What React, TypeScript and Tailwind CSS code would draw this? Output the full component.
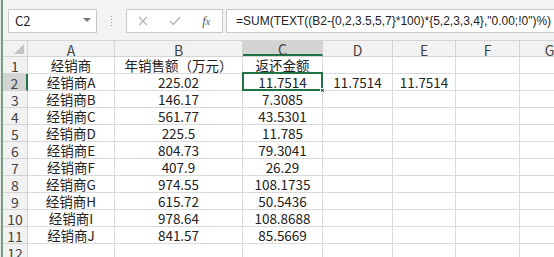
import React from "react";

const cols = [
  { k: "A", w: "w-[87px]" },
  { k: "B", w: "w-[128px]" },
  { k: "C", w: "w-[80px]" },
  { k: "D", w: "w-[70px]" },
  { k: "E", w: "w-[63px]" },
  { k: "F", w: "w-[64px]" },
  { k: "G", w: "w-[60px]" },
];

const data: string[][] = [
  ["经销商", "年销售额（万元）", "返还金额", "", "", "", ""],
  ["经销商A", "225.02", "11.7514", "11.7514", "11.7514", "", ""],
  ["经销商B", "146.17", "7.3085", "", "", "", ""],
  ["经销商C", "561.77", "43.5301", "", "", "", ""],
  ["经销商D", "225.5", "11.785", "", "", "", ""],
  ["经销商E", "804.73", "79.3041", "", "", "", ""],
  ["经销商F", "407.9", "26.29", "", "", "", ""],
  ["经销商G", "974.55", "108.1735", "", "", "", ""],
  ["经销商H", "615.72", "50.5436", "", "", "", ""],
  ["经销商I", "978.64", "108.8688", "", "", "", ""],
  ["经销商J", "841.57", "85.5669", "", "", "", ""],
  ["", "", "", "", "", "", ""],
];

const font = { fontFamily: '"Noto Sans CJK SC", "Noto Sans", sans-serif' };

export default function App() {
  return (
    <div
      className="w-[554px] h-[257px] overflow-hidden bg-white flex text-[#222]"
      style={font}
    >
      <div className="w-[1px] shrink-0 bg-[#e8e8e8]" />
      <div className="w-[2px] shrink-0 bg-[#789c82]" />
      <div className="flex-1 flex flex-col min-w-0">
        {/* toolbar */}
        <div className="h-[41px] shrink-0 bg-[#f3f3f3] border-b border-[#d4d4d4] flex items-center pt-[1px]">
          <div className="ml-[5px] w-[89px] h-[24px] bg-white border border-[#c8c8c8] flex items-center justify-between pl-[6px] pr-[5px] shrink-0">
            <span className="text-[13px] text-[#222]">C2</span>
            <svg width="8" height="5" viewBox="0 0 8 5">
              <path d="M0 0 L8 0 L4 4 Z" fill="#777" />
            </svg>
          </div>
          <div className="w-[29px] shrink-0 flex justify-center">
            <div className="flex flex-col gap-[2px]">
              <div className="w-[1px] h-[1px] bg-[#999]" />
              <div className="w-[1px] h-[1px] bg-[#999]" />
              <div className="w-[1px] h-[1px] bg-[#999]" />
              <div className="w-[1px] h-[1px] bg-[#999]" />
            </div>
          </div>
          <div className="w-[97px] h-[24px] bg-white border border-[#c8c8c8] flex items-center shrink-0">
            <div className="w-[32px] flex justify-center">
              <svg width="10" height="10" viewBox="0 0 10 10">
                <path d="M1 1 L9 9 M9 1 L1 9" stroke="#b5b5b5" strokeWidth="1.3" />
              </svg>
            </div>
            <div className="w-[32px] flex justify-center">
              <svg width="12" height="10" viewBox="0 0 12 10">
                <path d="M1 5 L4.5 8.5 L11 1" stroke="#b5b5b5" strokeWidth="1.3" fill="none" />
              </svg>
            </div>
            <div className="w-[32px] flex justify-center">
              <span
                className="italic text-[13px] text-[#555]"
                style={{ fontFamily: '"Liberation Serif", serif' }}
              >
                f<span className="text-[10px]">x</span>
              </span>
            </div>
          </div>
          <div className="ml-[3px] flex-1 h-[24px] bg-white border border-r-0 border-[#c8c8c8] flex items-center pl-[9px] whitespace-nowrap overflow-hidden">
            <span
              className="text-[12px] text-[#222]"
              style={{ fontFamily: '"Liberation Sans", Arial, sans-serif' }}
            >
              =SUM(TEXT((B2-{"{"}0,2,3.5,5,7{"}"}*100)*{"{"}5,2,3,3,4{"}"},"0.00;!0")%)
            </span>
          </div>
        </div>
        {/* column headers */}
        <div className="flex h-[16px] shrink-0 bg-[#f2f2f2] border-b border-[#d4d4d4]">
          <div className="w-[25px] shrink-0 border-r border-[#d4d4d4] relative">
            <svg className="absolute right-[3px] bottom-[2px]" width="10" height="10" viewBox="0 0 10 10">
              <path d="M10 0 L10 10 L0 10 Z" fill="#c4c4c4" />
            </svg>
          </div>
          {cols.map((c) => (
            <div
              key={c.k}
              className={`${c.w} shrink-0 border-r border-[#d4d4d4] flex items-center justify-center pt-[2px] text-[14px] leading-none text-[#444] ${
                c.k === "C" ? "bg-[#d3d3d3] border-b-2 border-b-[#217346]" : ""
              }`}
            >
              {c.k}
            </div>
          ))}
        </div>
        {/* rows */}
        {data.map((row, ri) => (
          <div key={ri} className="flex h-[17px] shrink-0">
            <div
              className={`w-[25px] shrink-0 border-b border-r flex items-center justify-center pt-[2px] text-[14px] leading-none text-[#444] ${
                ri === 1
                  ? "bg-[#d3d3d3] border-r-2 border-r-[#217346] border-b-[#d4d4d4]"
                  : "bg-[#f2f2f2] border-[#d4d4d4]"
              }`}
            >
              {ri + 1}
            </div>
            {cols.map((c, ci) => (
              <div
                key={c.k}
                className={`${c.w} shrink-0 border-r border-b border-[#dadada] flex items-center justify-center pt-[2px] text-[13.5px] leading-none whitespace-nowrap relative`}
              >
                {row[ci]}
                {ri === 1 && ci === 2 && (
                  <div className="absolute left-[-1px] top-[-2px] right-[-1px] bottom-[-1px] border-2 border-[#217346]">
                    <div className="absolute right-[-4px] bottom-[-4px] w-[5px] h-[5px] bg-[#217346] border border-white" />
                  </div>
                )}
              </div>
            ))}
          </div>
        ))}
      </div>
    </div>
  );
}
